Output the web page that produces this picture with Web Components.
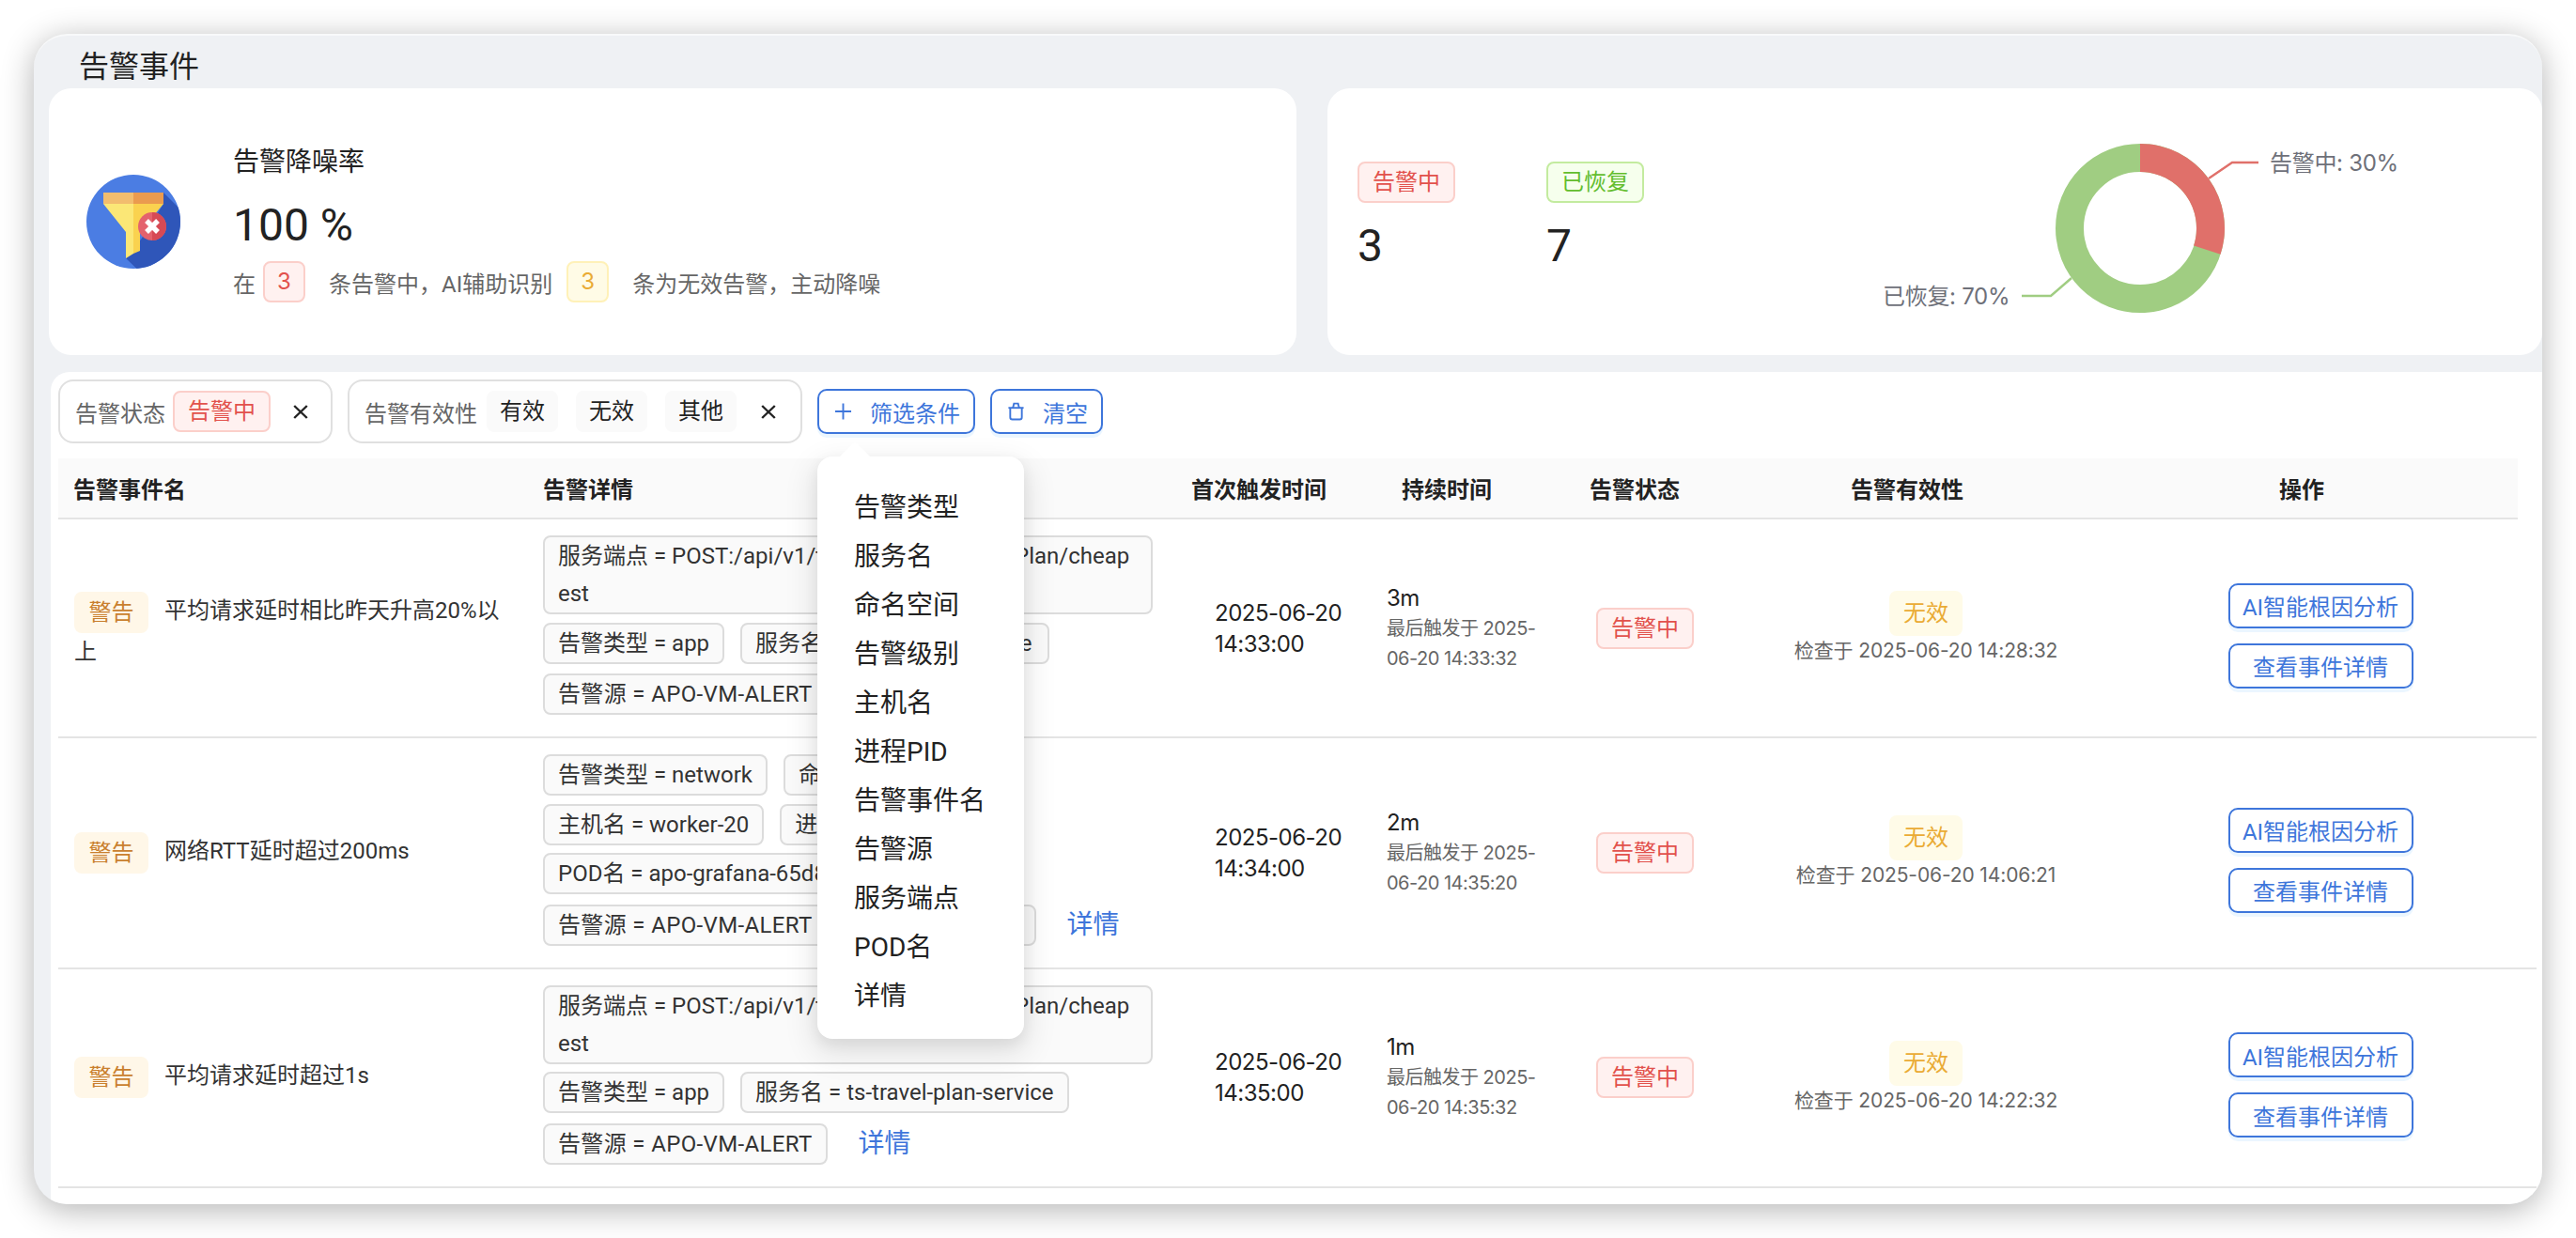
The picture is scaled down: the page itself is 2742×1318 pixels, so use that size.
<!DOCTYPE html>
<html lang="zh-CN">
<head>
<meta charset="utf-8">
<title>告警事件</title>
<style>
html,body{margin:0;padding:0;background:#fff;height:100%;overflow:hidden}
body{font-family:Roboto,"Noto Sans CJK SC",sans-serif;font-size:24px;color:#222;padding:36px;box-sizing:border-box;width:2742px;height:1318px}
.sp{letter-spacing:-1.7px}
</style>
</head>
<body>
<app-window>
  <page-title slot="title">告警事件</page-title>
  <rate-card slot="left"></rate-card>
  <stats-card slot="right"></stats-card>
  <alert-panel slot="panel">
    <filter-bar slot="filters"></filter-bar>
    <table-head slot="head"></table-head>
    <alert-row two level="警告" name="平均请求延时相比昨天升高20%以上" date="2025-06-20 14:33:00" dur="3m" last="2025-06-20 14:33:32" check="2025-06-20 14:28:32">
      <x-chip class="wide">服务端点 = POST:/api/v1/tr<span class="sp">avelplanservice/travel</span>Plan/cheap<br>est</x-chip>
      <x-chip>告警类型 = app</x-chip>
      <x-chip style="width:329px">服务名 = ts-trip-plan-service</x-chip>
      <x-chip class="src">告警源 = APO-VM-ALERT</x-chip>
      <x-link>详情</x-link>
    </alert-row>
    <alert-row level="警告" name="网络RTT延时超过200ms" date="2025-06-20 14:34:00" dur="2m" last="2025-06-20 14:35:20" check="2025-06-20 14:06:21">
      <x-chip>告警类型 = network</x-chip>
      <x-chip>命名空间 = apo</x-chip>
      <x-chip>主机名 = worker-20</x-chip>
      <x-chip>进程PID = 3172</x-chip>
      <x-chip>POD名 = apo-grafana-65d8f7c9b-xk2lp</x-chip>
      <x-chip class="src">告警源 = APO-VM-ALERT</x-chip>
      <x-chip style="width:205px">告警级别 = info</x-chip>
      <x-link>详情</x-link>
    </alert-row>
    <alert-row level="警告" name="平均请求延时超过1s" date="2025-06-20 14:35:00" dur="1m" last="2025-06-20 14:35:32" check="2025-06-20 14:22:32">
      <x-chip class="wide">服务端点 = POST:/api/v1/tr<span class="sp">avelplanservice/travel</span>Plan/cheap<br>est</x-chip>
      <x-chip>告警类型 = app</x-chip>
      <x-chip>服务名 = ts-travel-plan-service</x-chip>
      <x-chip class="src">告警源 = APO-VM-ALERT</x-chip>
      <x-link>详情</x-link>
    </alert-row>
  </alert-panel>
</app-window>

<script>
function def(name, css, html){
  const C = class extends HTMLElement{
    constructor(){super();this.attachShadow({mode:'open'});}
    connectedCallback(){
      const body = typeof html==='function'?html(this):html;
      this.shadowRoot.innerHTML='<style>'+css+'</style>'+body;
    }
  };
  customElements.define(name,C);
}
const NUM='font-family:Inter,"Noto Sans CJK SC",sans-serif;';

def('app-window',`
:host{display:block;width:2670px;height:1246px;border-radius:36px;background:#eff1f4;box-shadow:0 6px 34px rgba(0,0,0,.3);overflow:hidden;box-sizing:border-box;border-top:2px solid #f8f9fa}
.top{display:flex;gap:33px;margin:0 0 18px 16px}
.panel{margin-left:18px}
::slotted([slot=left]){flex:0 0 1328px;height:284px}
::slotted([slot=right]){flex:1 1 auto;height:284px}
`,`<slot name="title"></slot>
<div class="top"><slot name="left"></slot><slot name="right"></slot></div>
<div class="panel"><slot name="panel"></slot></div>`);

def('page-title',`:host{display:block;height:56px;padding-left:48px;font-size:32px;line-height:32px;padding-top:17px;box-sizing:border-box;color:#222}`,`<slot></slot>`);

def('x-tag',`
:host{display:inline-block;box-sizing:border-box;height:44px;line-height:40px;padding:0 14px;border:2px solid #d9d9d9;border-radius:8px;font-size:24px;white-space:nowrap;vertical-align:middle}
:host([kind=red]){background:#fff1f0;border-color:#fbcfca;color:#e2514c}
:host([kind=green]){background:#f6ffed;border-color:#c3eb9f;color:#63bd2d}
:host([kind=gold]){background:#fffbe6;border-color:#fff1b8;color:#eaab35}
:host([kind=goldsoft]){background:#fffbe8;border-color:#fffbe8;color:#eaab35;height:48px;line-height:44px;padding:0 13px}
:host([kind=orange]){background:#fff7e8;border-color:#fff7e8;color:#c97f2e;padding:0 13.5px}
:host([kind=plain]){background:#fafafa;border-color:#fafafa;color:#222;padding:0 12px}
`,`<slot></slot>`);

def('funnel-icon',`:host{display:block;width:100px;height:100px;flex:none}svg{display:block}`,`
<svg width="100" height="100" viewBox="92 186 100 100">
<defs><clipPath id="c"><circle cx="142" cy="236" r="50"/></clipPath></defs>
<circle cx="142" cy="236" r="50" fill="#4b7de3"/>
<polygon clip-path="url(#c)" points="174,205 205,236 205,300 160,300 134,275 150,255 174,217" fill="#2f56b9"/>
<polygon points="110,217 142,217 142,270 134,275 134,247" fill="#fbe776"/>
<polygon points="142,217 174,217 149,247 149,267 142,270" fill="#fad24f"/>
<rect x="110" y="205" width="32" height="12" fill="#f2bd6e"/>
<rect x="142" y="205" width="32" height="12" fill="#ea9b4f"/>
<circle cx="162" cy="241" r="15" fill="#e4626d"/>
<path d="M162 226a15 15 0 0 1 0 30z" fill="#d74a55"/>
<path d="M156 235l12 12M168 235l-12 12" stroke="#fff" stroke-width="5.4"/>
</svg>`);

def('rate-card',`
:host{display:flex;align-items:center;background:#fff;border-radius:24px;padding-left:40px;box-sizing:border-box}
.txt{margin-left:56px;margin-top:4px}
.t{font-size:28px;line-height:42px;color:#222}
.v{font-size:48px;line-height:48px;margin-top:22px;color:#222}
.s{display:flex;align-items:center;margin-top:12px;height:48px;font-size:24px;color:#666}
.s x-tag{width:45px;padding:0;text-align:center;${NUM}}
.a{margin-left:8px}.b{margin-left:25px}.c{margin-left:15px}
`,`<funnel-icon></funnel-icon>
<div class="txt">
<div class="t">告警降噪率</div>
<div class="v">100 %</div>
<div class="s"><span>在</span><x-tag class="a" kind="red">3</x-tag><span class="b">条告警中，AI辅助识别</span><x-tag class="c" kind="gold">3</x-tag><span class="b">条为无效告警，主动降噪</span></div>
</div>`);

def('stat-item',`
:host{display:block;width:201px;margin-bottom:10px}
.n{font-size:48px;line-height:56px;margin-top:18px;color:#222}
`,el=>`<x-tag kind="${el.getAttribute('kind')}">${el.getAttribute('label')}</x-tag><div class="n">${el.getAttribute('value')}</div>`);

def('donut-chart',`:host{display:block;width:700px;height:284px;margin-left:auto;margin-right:56px}svg{display:block}text{${NUM}font-size:24px;fill:#6e7079;letter-spacing:-.3px}`,`
<svg width="700" height="284" viewBox="1950 94 700 284">
<circle cx="2278" cy="243" r="75" fill="none" stroke="#a0cd82" stroke-width="30"/>
<path d="M2278 153A90 90 0 0 1 2363.6 270.8L2335.1 261.5A60 60 0 0 0 2278 183Z" fill="#e0706a"/>
<polyline points="2351,190 2376,173 2404,173" fill="none" stroke="#e0706a" stroke-width="2.4"/>
<polyline points="2205,296 2183,315 2152,315" fill="none" stroke="#a0cd82" stroke-width="2.4"/>
<text x="2416" y="182">告警中: 30%</text>
<text x="2004" y="324">已恢复: 70%</text>
</svg>`);

def('stats-card',`:host{display:flex;align-items:center;background:#fff;border-radius:24px;padding-left:32px;box-sizing:border-box}`,`
<stat-item kind="red" label="告警中" value="3"></stat-item>
<stat-item kind="green" label="已恢复" value="7"></stat-item>
<donut-chart></donut-chart>`);

def('alert-panel',`
:host{display:block;background:#fff;border-radius:20px 0 0 0;padding:8px 0 0 8px;box-sizing:border-box;height:886px}
`,`<slot name="filters"></slot><slot name="head"></slot><slot></slot>`);

def('filter-group',`
:host{display:flex;align-items:center;height:68px;box-sizing:border-box;border:2px solid #e0e0e0;border-radius:16px;padding-left:16px;font-size:24px;color:#666}
.tags{display:flex;gap:var(--tg,18px)}
.l{margin-right:var(--g,8px)}
svg{display:block;margin-left:var(--xl,24px);margin-right:var(--xr,24px)}
`,el=>`<span class="l">${el.getAttribute('label')}</span><div class="tags"><slot></slot></div>
<svg width="16" height="15" viewBox="0 0 16 15"><path d="M1.2 1l13.6 13M14.8 1L1.2 14" stroke="#222" stroke-width="2.4"/></svg>`);

def('x-btn',`
:host{display:inline-flex;box-sizing:border-box;align-items:center;justify-content:center;height:48px;border:2px solid #3e76db;border-radius:10px;color:#3e76db;font-size:24px;background:#fff;box-shadow:0 4px 0 rgba(5,145,255,.08);white-space:nowrap}
:host([icon]){padding:0 14px 0 16px;gap:19px}
svg{display:block}
`,el=>{
 const i=el.getAttribute('icon');
 let s='';
 if(i==='plus')s='<svg width="20" height="20" viewBox="0 0 20 20"><path d="M10 1v18M1 10h18" stroke="#3e76db" stroke-width="2"/></svg>';
 if(i==='trash')s='<svg width="20" height="22" viewBox="0 0 20 22" fill="none" stroke="#3e76db" stroke-width="2"><path d="M1.5 7h17"/><path d="M3.5 7v10.6a2.4 2.4 0 0 0 2.4 2.4h8.2a2.4 2.4 0 0 0 2.4-2.4V7"/><path d="M6.5 7l1.2-4.8h4.6L13.5 7"/></svg>';
 return s+'<slot></slot>';
});

def('filter-menu',`
:host{position:absolute;left:0;top:72px;width:220px;box-sizing:border-box;background:#fff;border-radius:16px;padding:29px 0 19px 39px;box-shadow:0 12px 32px 6px rgba(0,0,0,.09),0 6px 16px rgba(0,0,0,.07);font-size:28px;line-height:52px;color:#222;z-index:5}
.a{position:absolute;left:28px;top:-11px;width:24px;height:24px;background:#fff;transform:rotate(45deg);border-radius:4px 0 0 0}
div.i{position:relative}
`,`<div class="a"></div>`+['告警类型','服务名','命名空间','告警级别','主机名','进程PID','告警事件名','告警源','服务端点','POD名','详情'].map(t=>`<div class="i">${t}</div>`).join(''));

def('filter-bar',`
:host{display:flex;align-items:center;gap:16px;height:68px;margin-bottom:16px}
.w{position:relative;display:block}
x-btn.a{width:168px}
x-btn.b{width:120px}
.g2{--g:10px;--tg:19px;--xl:26px;--xr:26px}
`,`<filter-group label="告警状态"><x-tag kind="red">告警中</x-tag></filter-group>
<filter-group class="g2" label="告警有效性"><x-tag kind="plain">有效</x-tag><x-tag kind="plain">无效</x-tag><x-tag kind="plain">其他</x-tag></filter-group>
<div class="w"><x-btn class="a" icon="plus">筛选条件</x-btn><filter-menu></filter-menu></div>
<x-btn class="b" icon="trash">清空</x-btn>`);

def('table-head',`
:host{display:grid;grid-template-columns:498px 690px 180px 220px 180px 400px 440px;height:65px;width:2618px;box-sizing:border-box;background:#fafafa;border-bottom:2px solid #e4e4e4;font-weight:600;font-size:24px;color:#222;align-items:center}
.l{padding-left:16px}
.c{text-align:center}
`,['<div class="l">告警事件名</div>','<div class="l" style="padding-left:18px">告警详情</div>','<div class="c">首次触发时间</div>','<div class="c">持续时间</div>','<div class="c">告警状态</div>','<div class="c">告警有效性</div>','<div class="c">操作</div>'].join(''));

def('x-chip',`
:host{display:block;box-sizing:border-box;max-width:649px;border:2px solid #dcdcdc;border-radius:8px;background:#fafafa;padding:0 14px;font-size:24px;line-height:40px;color:#333}
:host(.wide){width:649px;white-space:nowrap;overflow:hidden}
:host(.src){letter-spacing:.35px}
`,`<slot></slot>`);
def('x-link',`:host{display:block;font-size:28px;line-height:48px;color:#3e76db;padding:0 16px}`,`<slot></slot>`);

def('alert-row',`
:host{display:grid;grid-template-columns:498px 716px 184px 200px 182px 416px 424px;width:2638px;box-sizing:border-box;border-bottom:2px solid #e4e4e4;align-items:center;font-size:24px}
.name{padding-left:17px;width:480px;box-sizing:border-box;line-height:40px;color:#333}
:host([two]) .name{padding-top:6px}
.name x-tag{margin-right:17px}
.details{padding:17px 0 21px 18px;display:flex;flex-wrap:wrap;align-items:center;column-gap:17px;row-gap:8.5px;width:670px;box-sizing:border-box}
.date{padding-left:17px;width:150px;line-height:33px;color:#222;letter-spacing:-.5px;${NUM}}
.dur{padding-left:16px;width:180px;line-height:32px;color:#222;${NUM}letter-spacing:-.5px}
.dur small{display:block;font-size:20px;color:#666}
.st{text-align:center}
.val{text-align:center}
.val div{font-size:21px;line-height:30px;color:#666;margin-top:1px;letter-spacing:-.12px;${NUM}}
.ops{display:flex;flex-direction:column;align-items:center}
.ops x-btn{width:197px;margin-top:16px}
`,el=>{
 const a=n=>el.getAttribute(n);
 const [d,t]=a('date').split(' ');
 return `<div class="name"><x-tag kind="orange">${a('level')}</x-tag>${a('name')}</div>
 <div class="details"><slot></slot></div>
 <div class="date">${d}<br>${t}</div>
 <div class="dur">${a('dur')}<small>最后触发于 ${a('last')}</small></div>
 <div class="st"><x-tag kind="red">告警中</x-tag></div>
 <div class="val"><x-tag kind="goldsoft">无效</x-tag><div>检查于 ${a('check')}</div></div>
 <div class="ops"><x-btn>AI智能根因分析</x-btn><x-btn>查看事件详情</x-btn></div>`;
});
</script>
</body>
</html>
